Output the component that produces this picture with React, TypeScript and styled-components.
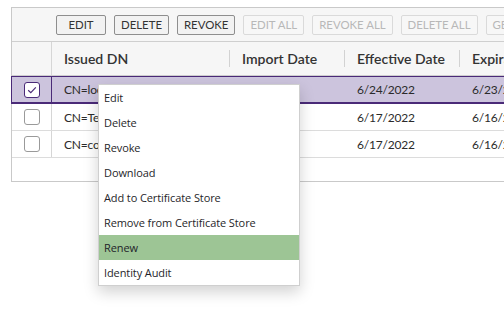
import React from "react";
import styled, { createGlobalStyle } from "styled-components";

const Global = createGlobalStyle`
  html, body { margin: 0; padding: 0; background: #ffffff; overflow: hidden; }
  body { width: 504px; height: 312px; }
`;

const Page = styled.div`
  position: relative;
  width: 504px;
  height: 312px;
  padding: 7px 0 0 11px;
  box-sizing: border-box;
  overflow: hidden;
  font-family: "Lato", "Liberation Sans", sans-serif;
`;

const Panel = styled.div`
  width: 640px;
  border: 1px solid #c9c9c9;
  background: #f6f6f6;
  box-sizing: border-box;
`;

const Toolbar = styled.div`
  display: flex;
  gap: 8px;
  height: 33px;
  align-items: center;
  padding: 0 0 0 44px;
  border-bottom: 1px solid #cfcfcf;
`;

const ToolButton = styled.button<{ $disabled?: boolean }>`
  height: 20px;
  min-width: 50px;
  padding: 0 6px;
  font-family: "Lato", "Liberation Sans", sans-serif;
  font-size: 11.4px;
  line-height: 18px;
  color: ${(p) => (p.$disabled ? "#b8b8b8" : "#333333")};
  background: ${(p) => (p.$disabled ? "#f7f7f7" : "#f2f2f2")};
  border: 1px solid ${(p) => (p.$disabled ? "#dadada" : "#8e8e8e")};
  border-radius: 2px;
  white-space: nowrap;
  box-sizing: border-box;
  flex-shrink: 0;
`;

const cols = "40px 178px 115px 115px 150px";

const HeaderRow = styled.div`
  display: grid;
  grid-template-columns: ${cols};
  height: 33px;
  border-bottom: 1px solid #cfcfcf;
`;

const HeaderCell = styled.div<{ $divider?: boolean; $first?: boolean }>`
  position: relative;
  display: flex;
  align-items: center;
  padding-left: 12px;
  font-size: 14px;
  font-weight: 600;
  color: #333333;
  white-space: nowrap;
  border-right: ${(p) => (p.$first ? "1px solid #d6d6d6" : "none")};
  &::after {
    content: "";
    display: ${(p) => (p.$divider ? "block" : "none")};
    position: absolute;
    right: 0;
    top: 8px;
    bottom: 8px;
    width: 1px;
    background: #d2d2d2;
  }
`;

const Body = styled.div`
  background: #ffffff;
  height: 105px;
`;

const Row = styled.div<{ $selected?: boolean }>`
  display: grid;
  grid-template-columns: ${cols};
  height: ${(p) => (p.$selected ? "28px" : "27px")};
  box-sizing: border-box;
  background: ${(p) => (p.$selected ? "#ccc4dd" : "#ffffff")};
  border-bottom: 1px solid #dcdcdc;
  ${(p) =>
    p.$selected
      ? `border-top: 1px solid #4a2a78; border-bottom: 2px solid #4a2a78; box-shadow: -1px 0 0 #4a2a78;`
      : ""}
`;

const Cell = styled.div<{ $first?: boolean; $selected?: boolean }>`
  display: flex;
  align-items: center;
  padding-left: ${(p) => (p.$first ? "0" : "12px")};
  justify-content: ${(p) => (p.$first ? "center" : "flex-start")};
  font-size: 12px;
  letter-spacing: -0.2px;
  color: #2b2b2b;
  border-right: ${(p) =>
    p.$first ? `1px solid ${p.$selected ? "#4a2a78" : "#d6d6d6"}` : "none"};
  white-space: nowrap;
  overflow: hidden;
`;

const CheckBox = styled.span<{ $checked?: boolean }>`
  width: 16px;
  height: 16px;
  box-sizing: border-box;
  border-radius: 3px;
  border: 1px solid ${(p) => (p.$checked ? "#4a2a78" : "#9a9a9a")};
  background: #ffffff;
  display: flex;
  align-items: center;
  justify-content: center;
  margin-left: 1px;
`;

const Menu = styled.div`
  position: absolute;
  left: 98px;
  top: 84px;
  width: 202px;
  background: #ffffff;
  border: 1px solid #cfcfcf;
  box-sizing: border-box;
  box-shadow: 0 6px 14px rgba(0, 0, 0, 0.18);
  font-family: "Open Sans", "Noto Sans", sans-serif;
`;

const MenuItem = styled.div<{ $active?: boolean }>`
  height: 25px;
  display: flex;
  align-items: center;
  padding-left: 5px;
  font-size: 11px;
  letter-spacing: -0.1px;
  color: #1f1f2a;
  background: ${(p) => (p.$active ? "#9dc595" : "transparent")};
  white-space: nowrap;
`;

const buttons = [
  { label: "EDIT" },
  { label: "DELETE" },
  { label: "REVOKE" },
  { label: "EDIT ALL", disabled: true },
  { label: "REVOKE ALL", disabled: true },
  { label: "DELETE ALL", disabled: true },
  { label: "GENERATE", disabled: true },
];

const rows = [
  { dn: "CN=localhost", imp: "", eff: "6/24/2022", exp: "6/23/2023", selected: true },
  { dn: "CN=Test", imp: "", eff: "6/17/2022", exp: "6/16/2023" },
  { dn: "CN=contoso", imp: "", eff: "6/17/2022", exp: "6/16/2023" },
];

const menu = [
  "Edit",
  "Delete",
  "Revoke",
  "Download",
  "Add to Certificate Store",
  "Remove from Certificate Store",
  "Renew",
  "Identity Audit",
];

export default function App() {
  return (
    <Page>
      <Global />
      <Panel>
        <Toolbar>
          {buttons.map((b) => (
            <ToolButton key={b.label} $disabled={b.disabled}>
              {b.label}
            </ToolButton>
          ))}
        </Toolbar>
        <HeaderRow>
          <HeaderCell $first />
          <HeaderCell $divider>Issued DN</HeaderCell>
          <HeaderCell $divider>Import Date</HeaderCell>
          <HeaderCell $divider>Effective Date</HeaderCell>
          <HeaderCell>Expiration Date</HeaderCell>
        </HeaderRow>
        <Body>
          {rows.map((r) => (
            <Row key={r.dn} $selected={r.selected}>
              <Cell $first $selected={r.selected}>
                <CheckBox $checked={r.selected}>
                  {r.selected && (
                    <svg width="12" height="12" viewBox="0 0 12 12">
                      <path d="M2.2 6.2 L4.8 8.6 L9.8 3.4" fill="none" stroke="#4a2a78" strokeWidth="1.2" />
                    </svg>
                  )}
                </CheckBox>
              </Cell>
              <Cell>{r.dn}</Cell>
              <Cell>{r.imp}</Cell>
              <Cell>{r.eff}</Cell>
              <Cell>{r.exp}</Cell>
            </Row>
          ))}
        </Body>
      </Panel>
      <Menu>
        {menu.map((m) => (
          <MenuItem key={m} $active={m === "Renew"}>
            {m}
          </MenuItem>
        ))}
      </Menu>
    </Page>
  );
}
